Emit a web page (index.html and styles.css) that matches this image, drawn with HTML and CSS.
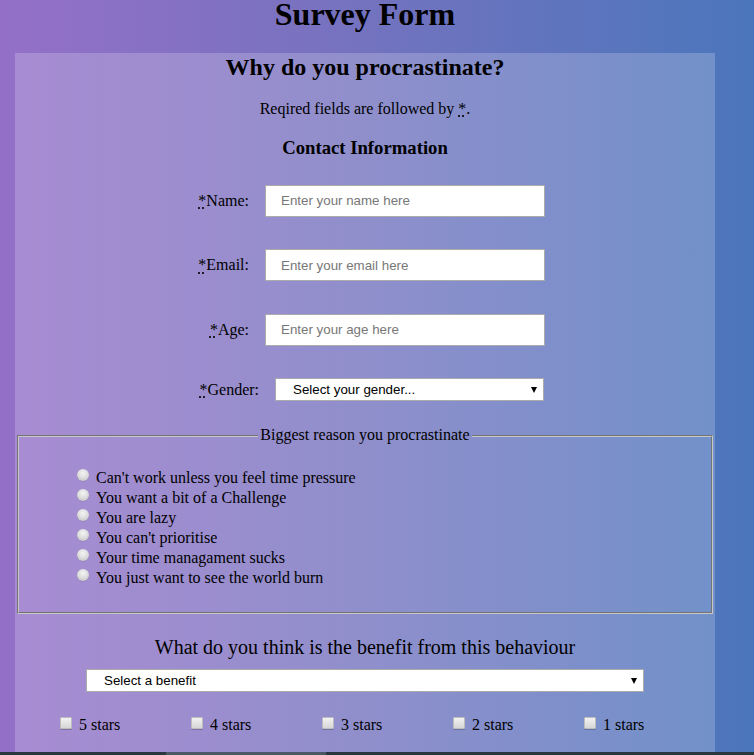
FILE: index.html
```html
<!DOCTYPE html>
<html lang="en">
<head>
<meta charset="utf-8">
<title>Survey Form</title>
<link rel="stylesheet" href="styles.css">
</head>
<body>
<h1 class="title">Survey Form</h1>
<main class="card">
  <h2 class="subtitle">Why do you procrastinate?</h2>
  <p class="note">Reqired fields are followed by <abbr title="required">*</abbr>.</p>
  <h3 class="section">Contact Information</h3>
  <form class="form">
    <div class="row">
      <label class="lbl" for="name"><abbr title="required">*</abbr>Name:</label>
      <input class="field" id="name" type="text" placeholder="Enter your name here">
    </div>
    <div class="row">
      <label class="lbl" for="email"><abbr title="required">*</abbr>Email:</label>
      <input class="field" id="email" type="text" placeholder="Enter your email here">
    </div>
    <div class="row">
      <label class="lbl" for="age"><abbr title="required">*</abbr>Age:</label>
      <input class="field" id="age" type="text" placeholder="Enter your age here">
    </div>
    <div class="row row-gender">
      <label class="lbl lbl-gender" for="gender"><abbr title="required">*</abbr>Gender:</label>
      <span class="select-wrap select-gender">
        <select class="select" id="gender">
          <option>Select your gender...</option>
          <option>Male</option>
          <option>Female</option>
        </select>
      </span>
    </div>

    <fieldset class="reasons">
      <legend class="legend">Biggest reason you procrastinate</legend>
      <ul class="choices">
        <li class="choice"><input class="radio" type="radio" name="reason"><span>Can't work unless you feel time pressure</span></li>
        <li class="choice"><input class="radio" type="radio" name="reason"><span>You want a bit of a Challenge</span></li>
        <li class="choice"><input class="radio" type="radio" name="reason"><span>You are lazy</span></li>
        <li class="choice"><input class="radio" type="radio" name="reason"><span>You can't prioritise</span></li>
        <li class="choice"><input class="radio" type="radio" name="reason"><span>Your time managament sucks</span></li>
        <li class="choice"><input class="radio" type="radio" name="reason"><span>You just want to see the world burn</span></li>
      </ul>
    </fieldset>

    <p class="question">What do you think is the benefit from this behaviour</p>
    <div class="benefit-line">
      <span class="select-wrap select-benefit">
        <select class="select" id="benefit">
          <option>Select a benefit</option>
          <option>More free time</option>
        </select>
      </span>
    </div>

    <div class="stars">
      <label class="star"><input class="check" type="checkbox"><span>5 stars</span></label>
      <label class="star"><input class="check" type="checkbox"><span>4 stars</span></label>
      <label class="star"><input class="check" type="checkbox"><span>3 stars</span></label>
      <label class="star"><input class="check" type="checkbox"><span>2 stars</span></label>
      <label class="star"><input class="check" type="checkbox"><span>1 stars</span></label>
    </div>
  </form>
</main>
<div class="bottom-bar"><span class="bottom-thumb"></span></div>
</body>
</html>
```

FILE: styles.css
```css
html {
  background: linear-gradient(to right, #9470c8 0%, #7a72c0 40%, #4b76bc 100%);
  min-height: 100%;
}

body {
  margin: 0;
  font-family: "Liberation Serif", "Times New Roman", serif;
  font-size: 16px;
  color: #000;
}

.title {
  width: 700px;
  margin: 0 0 26px 15px;
  padding-top: 1px;
  font-size: 32px;
  line-height: 26px;
  font-weight: bold;
  text-align: center;
}

.card {
  display: block;
  width: 700px;
  margin-left: 15px;
  min-height: 710px;
  background: rgba(255, 255, 255, 0.2);
  overflow: hidden;
}

.subtitle {
  margin: 0 0 18.5px;
  font-size: 24px;
  line-height: 28px;
  text-align: center;
}

.note {
  margin: 0 0 19px;
  font-size: 16px;
  line-height: 18px;
  text-align: center;
}

abbr {
  text-decoration: underline dotted;
  text-underline-offset: 2px;
}

.section {
  margin: 0;
  font-size: 18.72px;
  line-height: 22px;
  text-align: center;
}

.form {
  margin: 26.3px 0 0;
}

.row {
  display: flex;
  align-items: center;
  height: 32px;
  margin-bottom: 32.5px;
}

.row-gender {
  height: 23px;
  margin-bottom: 0;
}

.lbl {
  width: 234px;
  margin-right: 16px;
  text-align: right;
  font-size: 16px;
}

.lbl-gender {
  width: 244px;
}

.field {
  box-sizing: border-box;
  width: 280px;
  height: 32px;
  margin: 0;
  padding: 0 0 0 15px;
  border: 1px solid #ababab;
  background: #fff;
  font-family: "Liberation Sans", Arial, sans-serif;
  font-size: 13.333px;
  color: #000;
  outline: none;
}

.field::placeholder {
  color: #777;
}

.select-wrap {
  position: relative;
  display: inline-block;
  height: 23px;
}

.select-wrap::after {
  content: "";
  position: absolute;
  right: 7px;
  top: 9px;
  width: 0;
  height: 0;
  border-left: 3px solid transparent;
  border-right: 3px solid transparent;
  border-top: 6px solid #000;
  pointer-events: none;
}

.select-gender {
  width: 269px;
}

.select-benefit {
  width: 558px;
}

.select {
  -webkit-appearance: none;
  appearance: none;
  box-sizing: border-box;
  width: 100%;
  height: 23px;
  margin: 0;
  padding: 0 0 0 17px;
  border: 1px solid #ababab;
  border-radius: 0;
  background: #fff;
  font-family: "Liberation Sans", Arial, sans-serif;
  font-size: 13.333px;
  line-height: 21px;
  color: #000;
  outline: none;
}

.reasons {
  margin: 25px 2px 0;
  padding: 5.6px 12px 10px;
  border: 2px groove #c8c8c8;
  min-width: 0;
}

.legend {
  margin: 0 auto;
  padding: 0 2px;
  font-size: 16px;
  line-height: 18.4px;
}

.choices {
  list-style: none;
  margin: 17.5px 0 14.5px;
  padding: 0 0 0 40px;
}

.choice {
  height: 20px;
  line-height: 20px;
  font-size: 16px;
}

.radio {
  -webkit-appearance: none;
  appearance: none;
  display: inline-block;
  width: 12px;
  height: 12px;
  margin: 0 7px 2px 6px;
  padding: 0;
  border: none;
  border-radius: 50%;
  background: radial-gradient(circle at 50% 35%, #f4f4f4 0%, #dcdcdc 50%, #c4c4c4 85%, #b4b4b4 100%);
  box-shadow: 0 0.5px 0.5px rgba(0, 0, 0, 0.2);
  vertical-align: baseline;
}

.question {
  margin: 22px 0 9.3px;
  font-size: 20px;
  line-height: 23px;
  text-align: center;
}

.benefit-line {
  display: flex;
  justify-content: center;
  height: 23px;
}

.stars {
  display: flex;
  margin: 23.6px 0 0;
  padding-left: 45px;
  line-height: 20px;
  font-size: 16px;
}

.star {
  display: block;
  width: 132px;
}

.check {
  -webkit-appearance: none;
  appearance: none;
  display: inline-block;
  box-sizing: border-box;
  width: 12px;
  height: 12px;
  margin: 0 7px 1px 0;
  padding: 0;
  border: 1px solid #bdbdbd;
  border-radius: 1px;
  background: linear-gradient(#f2f2f2, #d6d6d6);
  box-shadow: 0 1px 0 rgba(0, 0, 0, 0.2);
  vertical-align: baseline;
}

.bottom-bar {
  position: fixed;
  left: 0;
  right: 0;
  bottom: 0;
  height: 3px;
  background: #29373f;
}

.bottom-thumb {
  position: absolute;
  left: 166px;
  top: 0;
  width: 160px;
  height: 3px;
  background: #4b5966;
}
```
